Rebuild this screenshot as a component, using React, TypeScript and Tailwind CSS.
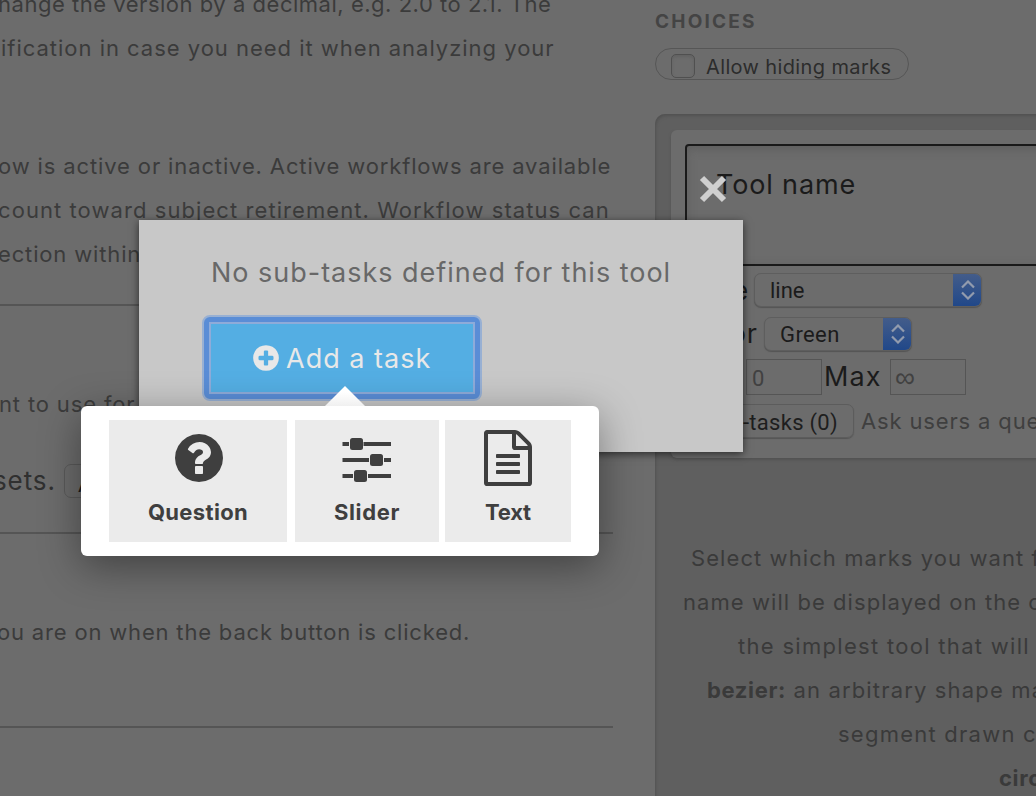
import React from "react";

const CIRCLE =
  "zm384 192q0 209-103 385.500t-279.500 279.500-385.500 103-385.500-103-279.500-279.500-103-385.500 103-385.500 279.500-279.500 385.500-103 385.500 103 279.500 279.500 103 385.500z";

function QuestionIcon() {
  return (
    <svg className="ml-px h-14 w-14" viewBox="0 0 1792 1792" fill="currentColor">
      <path
        d={
          "M1024 1376v-192q0-14-9-23t-23-9h-192q-14 0-23 9t-9 23v192q0 14 9 23t23 9h192q14 0 23-9t9-23zm256-672q0-88-55.5-163t-138.5-116-170-41q-243 0-371 213-15 24 8 42l132 100q7 6 19 6 16 0 25-12 53-68 86-92 34-24 86-24 48 0 85.500 26t37.500 59q0 38-20 61t-68 45q-63 28-115.500 86.500t-52.500 125.500v36q0 14 9 23t23 9h192q14 0 23-9t9-23q0-19 21.500-49.500t54.500-49.500q32-18 49-28.500t46-35 44.500-48 28-60.500 12.500-81" +
          CIRCLE
        }
      />
    </svg>
  );
}

function PlusIcon() {
  return (
    <svg className="h-[30px] w-[30px] shrink-0" viewBox="0 0 1792 1792" fill="currentColor">
      <path d="M1344 960v-128q0-26-19-45t-45-19h-256v-256q0-26-19-45t-45-19h-128q-26 0-45 19t-19 45v256h-256q-26 0-45 19t-19 45v128q0 26 19 45t45 19h256v256q0 26 19 45t45 19h128q26 0 45-19t19-45v-256h256q26 0 45-19t19-45zm320-64q0 209-103 385.500t-279.500 279.500-385.500 103-385.500-103-279.500-279.500-103-385.500 103-385.500 279.500-279.500 385.500-103 385.500 103 279.500 279.500 103 385.500z" />
    </svg>
  );
}

function SliderIcon() {
  return (
    <svg className="h-14 w-14" viewBox="0 0 56 56" fill="currentColor">
      <path d="M3.500 12h6.500v4h-6.500zM24.500 12H52v4H24.500zM3.500 28h26.500v4h-26.500zM45 28H52v4h-7zM3.500 44h10.500v4h-10.500zM29 44H52v4H29z" />
      <rect x="11" y="8" width="13" height="12" rx="2.500" />
      <rect x="31" y="24" width="13" height="12" rx="2.500" />
      <rect x="15" y="40" width="13" height="12" rx="2.500" />
    </svg>
  );
}

function TextIcon() {
  return (
    <svg className="h-14 w-14" viewBox="0 0 1792 1792" fill="currentColor">
      <path d="M1596 380q28 28 48 76t20 88v1152q0 40-28 68t-68 28h-1344q-40 0-68-28t-28-68v-1600q0-40 28-68t68-28h896q40 0 88 20t76 48zm-444-244v376h376q-10-29-22-41l-313-313q-12-12-41-22zm384 1528v-1024h-416q-40 0-68-28t-28-68v-416h-768v1536h1280zm-1024-864q0-14 9-23t23-9h704q14 0 23 9t9 23v64q0 14-9 23t-23 9h-704q-14 0-23-9t-9-23v-64zm736 224q14 0 23 9t9 23v64q0 14-9 23t-23 9h-704q-14 0-23-9t-9-23v-64q0-14 9-23t23-9h704zm0 256q14 0 23 9t9 23v64q0 14-9 23t-23 9h-704q-14 0-23-9t-9-23v-64q0-14 9-23t23-9h704z" />
    </svg>
  );
}

function Select({ value, className }: { value: string; className: string }) {
  return (
    <div
      className={
        "flex h-[34px] shrink-0 overflow-hidden rounded-[7px] border border-[#5e5e5e] bg-[#6c6c6c] font-['Roboto'] text-[22px] leading-[33px] text-[#1b1b1b] shadow-[0_1px_1px_#555] " +
        className
      }
    >
      <span className="grow pl-[15px]">{value}</span>
      <span className="-my-px -mr-px flex w-[29px] items-center justify-center bg-linear-to-b from-[#445d8a] to-[#1f4789]">
        <svg className="h-5 w-[14px]" viewBox="0 0 14 20" fill="none" stroke="#929bad" strokeWidth="2.200">
          <path d="M1 7.500 7 1.500l6 6M1 12.500l6 6 6-6" />
        </svg>
      </span>
    </div>
  );
}

function LeftColumn() {
  return (
    <div className="flex w-[613px] shrink-0 flex-col text-[22px] leading-[44px] tracking-[0.850px] text-[#3b3b3b]">
      <div className="-mt-[18px] h-[162px]">
        <p className="-ml-[2px] tracking-[0.520px]">hange the version by a decimal, e.g. 2.0 to 2.1. The</p>
        <p className="ml-px tracking-[0.980px]">ification in case you need it when analyzing your</p>
      </div>
      <div className="h-[160px]">
        <p className="-ml-[2px] tracking-[0.870px]">ow is active or inactive. Active workflows are available</p>
        <p className="-ml-[2px] tracking-[1.070px]">count toward subject retirement. Workflow status can</p>
        <p className="-ml-[2px]">ection within</p>
      </div>
      <hr className="border-t-2 border-[#555]" />
      <p className="-ml-px mt-[76px]">nt to use for</p>
      <div className="mt-[33px] flex h-[44px] items-center">
        <span className="-ml-[7px] w-[71px] text-[26px] tracking-[0.900px] text-[#303030]">sets.</span>
        <span className="h-[34px] w-[200px] rounded-[7px] border border-[#5a5a5a] pl-[13px] font-['Roboto'] text-[22px] leading-[40px] text-[#1b1b1b]">
          Add
        </span>
      </div>
      <hr className="mt-[29px] border-t-2 border-[#555]" />
      <p className="-ml-[3px] mt-[76px] tracking-[0.820px]">ou are on when the back button is clicked.</p>
      <hr className="mt-[72px] border-t-2 border-[#555]" />
    </div>
  );
}

function RightColumn() {
  return (
    <div className="ml-[42px] flex w-[600px] shrink-0 flex-col">
      <h3 className="mt-[11px] text-[19px] leading-[22px] font-bold tracking-[2.200px] text-[#444]">CHOICES</h3>
      <label className="mt-[15px] flex h-8 w-[254px] items-center rounded-full border-[1.500px] border-[#565656] pl-[15px] text-[20px] leading-[24px] tracking-[0.370px] text-[#2c2c2c]">
        <span className="mt-[3px] h-6 w-6 rounded-[5px] border border-[#505050] shadow-[inset_0_2px_3px_#626262]" />
        <span className="ml-[11px] mt-[6px]">Allow hiding marks</span>
      </label>
      <section className="mt-[34px] h-[700px] rounded-[10px] bg-[#5f5f5f] pt-4 pl-4 shadow-[inset_1px_2px_3px_#525252]">
        <div className="h-[328px] rounded-[6px] bg-[#6c6c6c] pt-[14px] pl-[14px] shadow-[0_2px_3px_#525252]">
          <div className="h-[122px] rounded-[4px] border-2 border-[#1a1a1a] pt-[21px] pl-[29px] text-[27px] leading-[36px] tracking-[0.850px] text-[#1b1b1b] shadow-[inset_0_3px_10px_#5f5f5f]">
            Tool name
          </div>
          <div className="mt-[2px] flex h-[44px] items-center text-[#1b1b1b]">
            <span className="w-[58px] text-right text-[26px] tracking-[0.800px]">Type</span>
            <Select value="line" className="ml-[11px] w-[228px]" />
          </div>
          <div className="flex h-[44px] items-center text-[#1b1b1b]">
            <span className="w-[72px] text-right text-[27px] tracking-[0.800px]">Color</span>
            <Select value="Green" className="ml-[7px] w-[148px] tracking-[0.400px]" />
          </div>
          <div className="flex h-[42px] items-center text-[27px] text-[#1b1b1b]">
            <span className="w-[61px] tracking-[0.800px]">Min</span>
            <span className="h-9 w-[76px] border border-[#555] pl-[5px] font-['Roboto'] text-[22px] leading-[37px] text-[#414141]">0</span>
            <span className="ml-[2px] w-[66px] tracking-[1.100px]">Max</span>
            <span className="h-9 w-[76px] border border-[#555] pl-[4px] font-['Liberation_Sans'] text-[28px] leading-[36px] text-[#414141]">∞</span>
          </div>
          <div className="mt-px flex h-[44px] items-center">
            <span className="h-[34px] w-[169px] rounded-[7px] border border-[#5c5c5c] pr-[15px] text-right font-['Roboto'] text-[22px] leading-[35px] tracking-[0.300px] text-[#1e1e1e] shadow-[0_1px_1px_#555]">
              Sub-tasks (0)
            </span>
            <span className="ml-[7px] text-[22px] leading-[44px] tracking-[0.850px] text-[#3f3f3f]">Ask users a question</span>
          </div>
        </div>
        <div className="mt-[78px] text-[22px] leading-[44px] tracking-[1.080px] text-[#3a3a3a]">
          <p className="ml-[20px]">Select which marks you want for this</p>
          <p className="ml-[12px] tracking-[1.060px]">name will be displayed on the classification</p>
          <p className="ml-[67px] tracking-[1.300px]">the simplest tool that will work</p>
          <p className="ml-[36px] tracking-[1.160px]">
            <b className="tracking-[0.650px]">bezier:</b> <span>an arbitrary shape made</span>
          </p>
          <p className="ml-[167px] tracking-[1.240px]">segment drawn can</p>
          <p className="ml-[328px] tracking-[0.650px]">
            <b>circle:</b>
          </p>
        </div>
      </section>
    </div>
  );
}

function Dialog() {
  return (
    <div className="absolute top-[220px] left-[139px] h-[232px] w-[604px] bg-[#c8c8c8] pt-[33px] shadow-[0_2px_8px_rgba(0,0,0,0.6)]">
      <p className="pl-[72px] text-[27px] leading-[40px] tracking-[0.980px] text-[#686868]">No sub-tasks defined for this tool</p>
      <div className="mt-[22px] ml-[63px] h-[86px] w-[280px] rounded-[8px] border-2 border-[#98b0d3] bg-[#5a8dd6] p-[5px]">
        <button className="flex h-[72px] w-[266px] items-center border-2 border-[#8eabd9] bg-[#54aee3] pl-[40px] text-[27px] leading-[36px] tracking-[1px] text-[#e8e8e8]">
          <PlusIcon />
          <span className="mt-0.5 ml-[5px]">Add a task</span>
        </button>
      </div>
      <svg className="absolute top-[-46px] left-[560px] h-[30px] w-[30px]" viewBox="0 0 30 30" stroke="#cfcfcf" strokeWidth="6">
        <path d="M3 4l22 22M25 4L3 26" />
      </svg>
    </div>
  );
}

function TaskMenu() {
  return (
    <div className="absolute top-[406px] left-[81px] flex h-[150px] w-[518px] rounded-[6px] bg-white py-[14px] pl-[28px] text-[22px] leading-[28px] font-bold text-[#3f3f3f] shadow-[0_10px_40px_rgba(0,0,0,0.4)]">
      <svg className="absolute -top-5 left-[244px] h-5 w-10 overflow-visible" viewBox="0 0 40 20">
        <defs>
          <linearGradient id="tip" x1="0" x2="0" y1="0" y2="1">
            <stop offset="0.300" stopColor="#fff" />
            <stop offset="1" stopColor="#f0f0f0" />
          </linearGradient>
        </defs>
        <path d="M0 20 20 0l20 20z" fill="url(#tip)" />
      </svg>
      <div className="flex w-[178px] flex-col items-center bg-[#ebebeb] pt-[10px]">
        <QuestionIcon />
        <span className="mt-3 tracking-[0.350px]">Question</span>
      </div>
      <div className="ml-2 flex w-[144px] flex-col items-center bg-[#ebebeb] pt-[10px]">
        <SliderIcon />
        <span className="mt-3 tracking-[0.650px]">Slider</span>
      </div>
      <div className="ml-[6px] flex w-[126px] flex-col items-center bg-[#ebebeb] pt-[10px]">
        <TextIcon />
        <span className="mt-3 tracking-[-0.200px]">Text</span>
      </div>
    </div>
  );
}

export default function App() {
  return (
    <div className="relative h-[796px] w-[1036px] overflow-hidden bg-[#6c6c6c] font-['Inter',sans-serif] whitespace-nowrap">
      <div className="flex">
        <LeftColumn />
        <RightColumn />
      </div>
      <Dialog />
      <TaskMenu />
    </div>
  );
}
